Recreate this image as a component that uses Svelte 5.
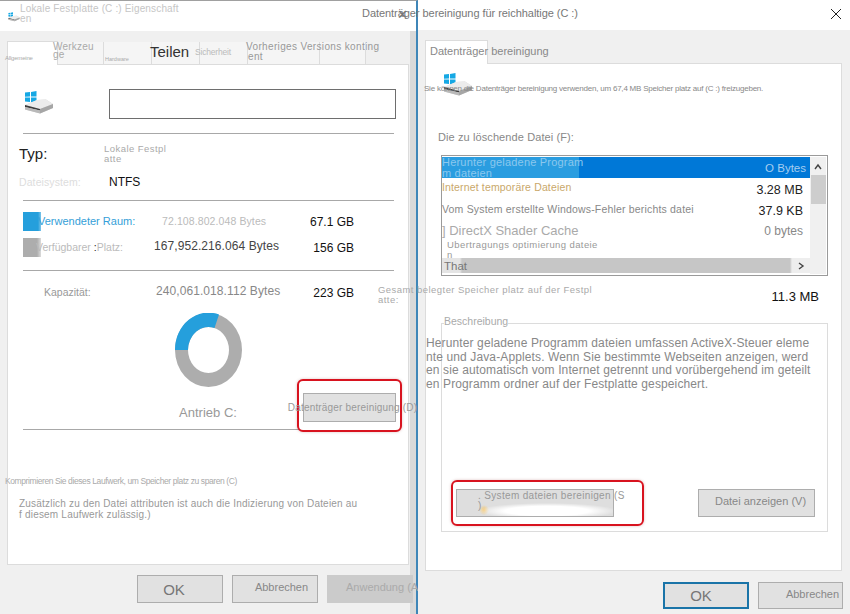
<script>
  const leftTabs = [
    { label: 'Werkzeu<br>ge', cls: 'werk' },
    { label: 'Hardware', cls: 'hard' },
    { label: 'Teilen', cls: 'teil' },
    { label: 'Sicherheit', cls: 'sich' },
    { label: 'Vorheriges Versions konting<br>ent', cls: 'vor' },
    { label: '', cls: 'last' }
  ];
</script>

{#snippet drive(cls)}
  <svg class={cls} viewBox="0 0 30 25" aria-hidden="true">
    <polygon points="1,3.6 6,3 6,7.6 1,7.8" fill="#16a8e4" />
    <polygon points="7,2.9 12.5,2 12.5,7.4 7,7.6" fill="#16a8e4" />
    <polygon points="1,8.6 6,8.6 6,13 1,12.6" fill="#16a8e4" />
    <polygon points="7,8.6 12.5,8.6 12.5,14 7,13.2" fill="#16a8e4" />
    <polygon points="1,16 13,11 22,10.5 29,15 29,19 16,24.5 1,20.5" fill="#d6d6d6" />
    <polygon points="1,16 16,20 29,15 22,10.5 13,11" fill="#ececec" />
    <polygon points="1,16 16,20 16,21.5 1,18" fill="#3d3d3d" />
    <polygon points="1,18 16,21.5 16,24.5 1,20.5" fill="#b9b9b9" />
    <polygon points="16,20 29,15 29,19 16,24.5" fill="#a6a6a6" />
  </svg>
{/snippet}

<div class="desktop">
  <section class="win left">
    <header class="title">
      {@render drive('tiny')}
      <span class="title-text">Lokale Festplatte (C :) Eigenschaft<br>en</span>
      <span class="close">✕</span>
    </header>

    <nav class="tabs">
      <span class="tab active"><span class="all">Allgemeine</span></span>
      {#each leftTabs as t}
        <span class="tab {t.cls}">{@html t.label}</span>
      {/each}
    </nav>

    <div class="panel">
      <div class="name-row">
        {@render drive('big')}
        <div class="name-input"></div>
      </div>
      <hr class="rule first" />
      <div class="info typ">
        <span class="typ-label">Typ:</span>
        <span class="typ-value">Lokale Festpl<br>atte</span>
      </div>
      <div class="info fs">
        <span class="fs-label">Dateisystem:</span>
        <span class="fs-value">NTFS</span>
      </div>
      <hr class="rule second" />

      <div class="stat used">
        <i class="swatch blue"></i>
        <span class="s-label">Verwendeter Raum:</span>
        <span class="s-bytes">72.108.802.048 Bytes</span>
        <span class="s-gb">67.1 GB</span>
      </div>
      <div class="stat free">
        <i class="swatch grey"></i>
        <span class="s-label">Verfügbarer <b>:</b>Platz:</span>
        <span class="s-bytes">167,952.216.064 Bytes</span>
        <span class="s-gb">156 GB</span>
      </div>
      <hr class="rule third" />
      <div class="stat cap">
        <i></i>
        <span class="s-label">Kapazität:</span>
        <span class="s-bytes">240,061.018.112 Bytes</span>
        <span class="s-gb">223 GB</span>
      </div>

      <div class="chart">
        <svg viewBox="0 0 67 74" width="67" height="74" aria-hidden="true">
          <path fill="#adadad" fill-rule="evenodd" d="M0 37A33.5 37 0 1 0 67 37A33.5 37 0 1 0 0 37ZM13 37A20.5 23 0 1 0 54 37A20.5 23 0 1 0 13 37Z" />
          <path fill="#259fdc" d="M0 37A33.5 37 0 0 1 44 1.5L39.5 15A20.5 23 0 0 0 13 37Z" />
        </svg>
        <span class="drive-name">Antrieb C:</span>
      </div>
      <hr class="rule fourth" />

      <p class="compress">Komprimieren Sie dieses Laufwerk, um Speicher platz zu sparen (C)</p>
      <p class="index">Zusätzlich zu den Datei attributen ist auch die Indizierung von Dateien au<br>f diesem Laufwerk zulässig.)</p>

      <div class="mark mark-left">
        <span class="btn clean">Datenträger bereinigung (D)</span>
      </div>
    </div>

    <footer class="foot">
      <span class="btn ok">OK</span>
      <span class="btn cancel">Abbrechen</span>
      <span class="btn apply">Anwendung (A</span>
    </footer>
  </section>

  <section class="win right">
    <header class="title">
      <span class="title-text">Datenträger bereinigung für reichhaltige (C :)</span>
      <svg class="x" viewBox="0 0 12 12" aria-hidden="true"><path d="M1 1L11 11M11 1L1 11" stroke="#222" stroke-width="1" fill="none" /></svg>
    </header>

    <nav class="tabs">
      <span class="tab active single">Datenträger bereinigung</span>
    </nav>

    <div class="panel">
      <div class="intro">
        {@render drive('big')}
        <p>Sie können die Datenträger bereinigung verwenden, um 67,4 MB Speicher platz auf (C :) freizugeben.</p>
      </div>
      <p class="list-label">Die zu löschende Datei (F):</p>

      <div class="list">
        <div class="rows">
          <div class="row sel">
            <span class="sel-name">Herunter geladene Program<br>m dateien</span>
            <span class="size">O Bytes</span>
          </div>
          <div class="row inet">
            <span class="name">Internet temporäre Dateien</span>
            <span class="size">3.28 MB</span>
          </div>
          <div class="row err">
            <span class="name">Vom System erstellte Windows-Fehler berichts datei</span>
            <span class="size">37.9 KB</span>
          </div>
          <div class="row dx">
            <span class="name">] DirectX Shader Cache</span>
            <span class="size">0 bytes</span>
          </div>
          <div class="row opt">
            <span>Ubertragungs optimierung dateie<br>n</span>
          </div>
          <div class="hbar">
            <span>That</span>
            <svg viewBox="0 0 8 8" aria-hidden="true"><path d="M2 1L6 4L2 7" stroke="#444" stroke-width="1.4" fill="none" /></svg>
          </div>
        </div>
        <div class="vbar">
          <svg viewBox="0 0 8 8" aria-hidden="true"><path d="M1 6L4 2L7 6" stroke="#444" stroke-width="1.4" fill="none" /></svg>
          <i></i>
        </div>
      </div>

      <div class="total">
        <span class="total-label">Gesamt belegter Speicher platz auf der Festpl<br>atte:</span>
        <span class="total-size">11.3 MB</span>
      </div>

      <fieldset class="desc">
        <legend>Beschreibung</legend>
        <p>Herunter geladene Programm dateien umfassen ActiveX-Steuer eleme<br>nte und Java-Applets. Wenn Sie bestimmte Webseiten anzeigen, werd<br>en sie automatisch vom Internet getrennt und vorübergehend im geteilt<br>en Programm ordner auf der Festplatte gespeichert.</p>
        <div class="desc-actions">
          <div class="mark mark-right">
            <span class="btn sys"><span>. System dateien bereinigen (S<br>)</span></span>
          </div>
          <span class="btn view">Datei anzeigen (V)</span>
        </div>
      </fieldset>
    </div>

    <footer class="foot">
      <span class="btn ok">OK</span>
      <span class="btn cancel">Abbrechen</span>
    </footer>
  </section>
</div>

<style>
  :global(body) { margin: 0; background: #f0f0f0; font-family: "Liberation Sans", Arial, sans-serif; }
  .desktop { position: relative; width: 850px; height: 614px; overflow: hidden; }
  .win { position: absolute; top: 0; height: 614px; box-sizing: border-box; background: #f0f0f0; display: flex; flex-direction: column; }
  .win.left { left: 0; width: 418px; border-top: 1px solid #a0a0a0; border-right: 2px solid #3f86b8; background: linear-gradient(to right, #f0f0f0 410px, #d9d9d9 410px); }
  .win.right { left: 418px; width: 432px; }
  .title { position: relative; flex: none; display: flex; align-items: flex-start; background: #fff; }
  .left .title { height: 30px; }
  .right .title { height: 30px; }
  .tiny { width: 12px; height: 11px; margin: 10px 0 0 8px; flex: none; }
  .left .title-text { margin: 3px 0 0 0; font-size: 10px; line-height: 10px; letter-spacing: .15px; color: #c6c6c6; }
  .close { position: absolute; left: 397px; top: 6px; font-size: 13px; color: #777; }
  .right .title-text { margin: 7px 0 0 -56px; font-size: 11px; line-height: 13px; letter-spacing: -.05px; color: #777; white-space: nowrap; }
  .x { position: absolute; right: 8px; top: 8px; width: 12px; height: 12px; }

  .tabs { flex: none; display: flex; align-items: flex-end; }
  .left .tabs { height: 33px; padding-left: 7px; background: linear-gradient(#f5f5f5, #f5f5f5) 58px bottom / 308px 22px no-repeat; }
  .right .tabs { height: 33px; padding-left: 7px; }
  .tab { box-sizing: border-box; height: 22px; flex: none; border-right: 1px solid #dcdcdc; color: #999; white-space: nowrap; }
  .tab.active { position: relative; background: #fff; height: 24px; border: 1px solid #dcdcdc; border-bottom: 0; margin-bottom: -1px; z-index: 1; width: 51px; }
  .all { display: block; margin: 13px 0 0 -3px; font-size: 6px; letter-spacing: -.2px; color: #aaa; }
  .werk { position: relative; z-index: 2; width: 51px; margin-left: -5px; font-size: 10px; line-height: 8px; letter-spacing: .2px; padding-top: 1px; color: #aaa; }
  .hard { width: 48px; font-size: 5.5px; color: #aaa; padding: 14px 0 0 1px; }
  .teil { width: 48px; font-size: 15px; color: #333; padding-top: 1px; text-indent: -2px; }
  .sich { width: 48px; font-size: 8.5px; color: #bbb; letter-spacing: -.2px; padding-top: 5px; text-indent: -5px; }
  .vor { width: 72px; font-size: 10px; line-height: 10px; letter-spacing: .35px; color: #999; text-indent: -2px; }
  .last { width: 46px; }
  .tab.single { width: 63px; height: 24px; font-size: 11px; line-height: 20px; padding-left: 4px; color: #888; }

  .panel { position: relative; flex: none; box-sizing: border-box; background: #fff; border: 1px solid #dcdcdc; }
  .left .panel { margin-left: 7px; width: 402px; height: 501px; }
  .right .panel { margin-left: 7px; width: 417px; height: 508px; display: flex; flex-direction: column; }

  .name-row { display: flex; padding: 24px 0 0 16px; height: 30px; }
  .big { width: 30px; height: 25px; flex: none; }
  .name-input { box-sizing: border-box; width: 287px; height: 30px; margin-left: 55px; border: 1px solid #6e6e6e; }
  .rule { border: 0; height: 1px; background: #a8a8a8; margin: 0 0 0 15px; width: 371px; }
  .rule.first { margin-top: 14px; }
  .info { display: grid; grid-template-columns: 85px 1fr; padding-left: 11px; }
  .typ { height: 30px; padding-top: 9px; box-sizing: border-box; align-items: center; }
  .typ-label { font-size: 15px; color: #222; margin-top: -1px; }
  .typ-value { font-size: 9.5px; line-height: 10px; letter-spacing: .45px; color: #aaa; }
  .fs { height: 31px; align-items: center; padding-top: 5px; box-sizing: border-box; grid-template-columns: 90px 1fr; }
  .fs-label { font-size: 10.5px; color: #ddd; letter-spacing: .1px; }
  .fs-value { font-size: 12px; color: #111; }
  .rule.second { margin-top: 5px; }

  .stat { display: grid; grid-template-columns: 15px 116px 1fr 56px; align-items: center; margin-left: 15px; width: 331px; white-space: nowrap; }
  .stat .s-gb { font-size: 12px; color: #111; text-align: right; margin-top: 2px; }
  .used { margin-top: 10px; height: 20px; }
  .free { margin-top: 6px; height: 20px; }
  .cap { margin-top: 11px; height: 20px; }
  .swatch { display: block; width: 16px; height: 19px; margin-right: -1px; }
  .blue { background: linear-gradient(to right, #259fdc 15px, #7cc5ea); width: 18px; }
  .grey { background: linear-gradient(to right, #adadad 14px, #dcdcdc); width: 18px; }
  .s-label { font-size: 11px; color: #aaa; }
  .used .s-label { color: #34a0d8; }
  .free .s-label { color: #bbb; font-size: 10.5px; margin-left: -2px; }
  .free .s-label b { color: #222; font-weight: 400; }
  .cap .s-label { color: #999; font-size: 10.5px; margin-left: 6px; }
  .s-bytes { font-size: 12px; letter-spacing: .08px; }
  .used .s-bytes { font-size: 10.5px; color: #bbb; letter-spacing: .1px; margin-left: 8px; }
  .free .s-bytes { color: #444; margin-top: -2px; }
  .cap .s-bytes { color: #888; margin: -2px 0 0 2px; }
  .rule.third { margin-top: 13px; }

  .chart { display: flex; flex-direction: column; align-items: center; width: 400px; margin-top: 11px; }
  .chart svg { display: block; }
  .drive-name { margin-top: 18px; font-size: 13px; color: #999; line-height: 16px; }
  .rule.fourth { margin-top: 8px; width: 276px; }

  .compress { margin: 45px 0 0 -3px; font-size: 8.5px; line-height: 12px; letter-spacing: -.4px; color: #aaa; white-space: nowrap; }
  .index { margin: 11px 0 0 11px; font-size: 10px; line-height: 11px; letter-spacing: .2px; color: #999; white-space: nowrap; }

  .btn { box-sizing: border-box; display: flex; align-items: center; justify-content: center; flex: none; background: #e1e1e1; border: 1px solid #adadad; color: #888; white-space: nowrap; }
  .mark { position: absolute; box-sizing: border-box; background: #fff; border: 2px solid #d8131f; border-radius: 6px; box-shadow: 0 0 3px rgba(120,0,0,.25); }
  .mark-left { left: 289px; top: 314px; width: 105px; height: 53px; }
  .clean { position: absolute; left: 4px; top: 12px; width: 93px; height: 29px; font-size: 10px; letter-spacing: .18px; color: #999; padding: 0 0 1px 6px; }

  .foot { flex: none; display: flex; }
  .left .foot { padding: 10px 0 0 137px; gap: 9px; }
  .right .foot { padding: 11px 0 0 245px; gap: 9px; }
  .foot .btn { width: 86px; height: 28px; }
  .foot .ok { font-size: 15px; color: #777; padding-right: 12px; }
  .foot .cancel { font-size: 11px; color: #888; padding: 0 0 4px 13px; }
  .foot .apply { width: 86px; background: #cbcbcb; border-color: #cbcbcb; font-size: 11px; color: #aaa; justify-content: flex-start; padding: 0 0 4px 18px; }
  .right .foot .ok { border: 2px solid #1a74a8; height: 27px; padding-right: 10px; }
  .right .foot .cancel { height: 27px; width: 85px; padding: 0 0 3px 24px; }

  .intro { display: grid; height: 62px; }
  .intro > * { grid-area: 1 / 1; }
  .intro .big { margin: 7px 0 0 17px; }
  .intro p { margin: 19px 0 0 -2px; font-size: 8px; line-height: 11px; letter-spacing: -.22px; color: #888; white-space: nowrap; }
  .list-label { margin: 4px 0 0 12px; font-size: 11px; line-height: 14px; letter-spacing: .1px; color: #888; }

  .list { flex: none; box-sizing: border-box; display: flex; margin: 11px 0 0 15px; width: 387px; height: 121px; border: 1px solid #9a9a9a; padding: 1px 1px 1px 0; background: #fff; }
  .rows { position: relative; width: 368px; flex: none; }
  .row { box-sizing: border-box; display: flex; justify-content: space-between; align-items: center; height: 21px; padding-right: 7px; white-space: nowrap; }
  .size { font-size: 12.5px; color: #222; }
  .sel { background: #0078d7; position: relative; padding-right: 4px; }
  .sel-name { align-self: stretch; box-sizing: border-box; width: 137px; background: #2a9de0; color: #8cc8ee; font-size: 11px; line-height: 11px; letter-spacing: .2px; }
  .sel .size { color: #a6cdf0; font-size: 11.5px; }
  .inet { font-size: 10.5px; letter-spacing: .15px; color: #c9a86a; height: 20px; }
  .inet .name { padding-bottom: 2px; }
  .inet .size { padding-top: 4px; }
  .err { font-size: 10.5px; letter-spacing: .18px; color: #888; height: 22px; }
  .err .size { padding-top: 4px; }
  .err .size, .inet .size, .dx .size { letter-spacing: 0; }
  .dx { font-size: 13px; color: #aaa; height: 21px; }
  .dx .size { color: #888; font-size: 12px; }
  .opt { display: block; height: 17px; font-size: 9.5px; line-height: 10px; letter-spacing: .4px; color: #999; padding-left: 5px; margin-top: -1px; margin-bottom: 1px; }
  .hbar { position: relative; box-sizing: border-box; display: flex; align-items: center; justify-content: space-between; height: 15px; padding: 0 5px 0 2px; background: linear-gradient(to right, #e4e4e4 18px, #c6c6c6 20px, #c6c6c6 348px, #eee 350px); }
  .hbar span { font-size: 11.5px; color: #777; }
  .hbar svg { width: 8px; height: 8px; }
  .vbar { flex: 1; background: #f0f0f0; display: flex; flex-direction: column; align-items: center; padding-top: 6px; }
  .vbar svg { width: 8px; height: 8px; }
  .vbar i { display: block; width: 15px; height: 29px; margin-top: 4px; background: #cdcdcd; }

  .total { display: flex; justify-content: space-between; height: 34px; margin: 9px 22px 0 -48px; }
  .total-label { font-size: 9.5px; line-height: 10px; letter-spacing: .45px; color: #aaa; white-space: nowrap; }
  .total-size { font-size: 13px; color: #111; margin-top: 4px; }

  .desc { position: relative; box-sizing: border-box; margin: -4px 0 0 15px; padding: 0; width: 387px; height: 217px; border: 1px solid #dcdcdc; }
  legend { margin-left: 2px; padding: 0 0 4px; font-size: 10.5px; line-height: 12px; color: #aaa; }
  .desc p { margin: 6px 0 0 -16px; font-size: 12px; line-height: 13.6px; letter-spacing: .12px; color: #888; white-space: nowrap; }
  .desc-actions { position: absolute; left: 0; top: 0; width: 100%; height: 100%; }
  .mark-right { left: 9px; top: 149px; width: 193px; height: 46px; background: transparent; }
  .sys { position: absolute; left: 3px; top: 7px; width: 158px; height: 28px; justify-content: flex-start; font-size: 10px; line-height: 10px; letter-spacing: .33px; color: #999; background: radial-gradient(ellipse 70px 8px at 90px 21px, #fff 60%, rgba(255,255,255,0)), radial-gradient(circle 5px at 27px 20px, #f4c56a, rgba(255,255,255,0)), #dedede; }
  .sys span { margin-left: 21px; margin-top: -5px; }
  .view { position: absolute; left: 256px; top: 158px; width: 117px; height: 28px; font-size: 11px; color: #888; padding: 0 0 4px 8px; }
</style>
